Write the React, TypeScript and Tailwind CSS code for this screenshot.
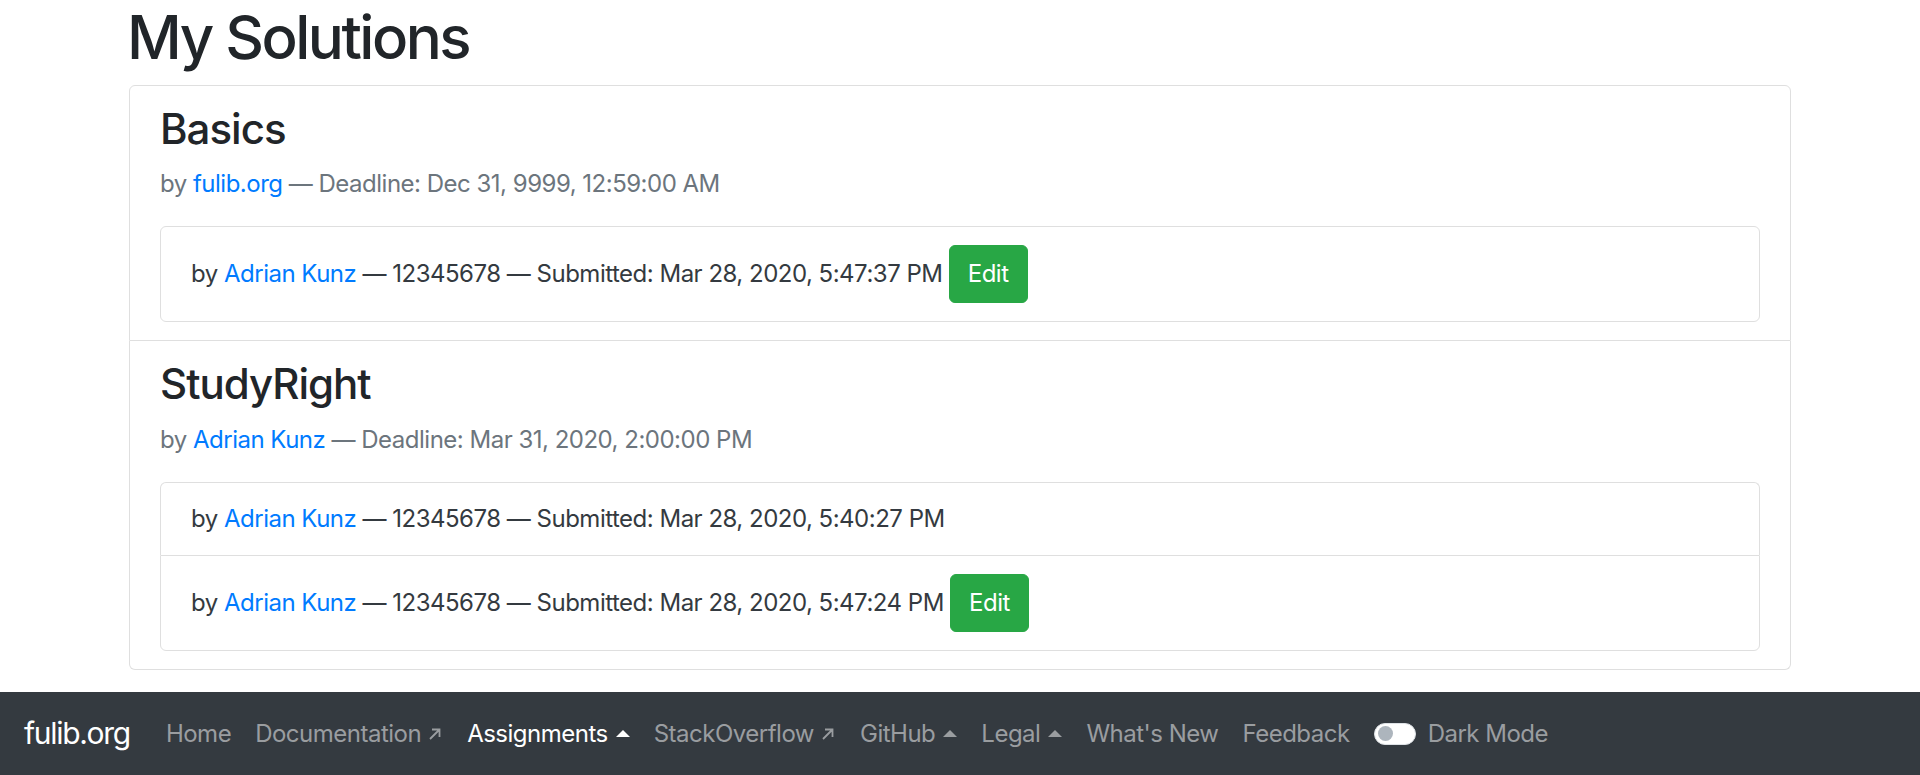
import React from "react";

const font = { fontFamily: "Inter, 'Noto Sans', sans-serif" };

const ExtIcon = () => (
  <svg
    viewBox="0 0 16 16"
    className="ml-[6px] inline-block h-[16px] w-[16px] align-[-1px]"
    fill="none"
    stroke="currentColor"
    strokeWidth="1.8"
  >
    <path d="M3 13 L12.5 3.5 M5 3.5 H12.5 V11" />
  </svg>
);

const Caret = () => (
  <span className="ml-[8px] inline-block h-0 w-0 border-x-[7px] border-b-[7px] border-t-0 border-x-transparent border-b-current align-[5px]" />
);

const Submission = ({ time, edit, last }) => (
  <div
    className={
      "border border-[#dfdfdf] px-[30px] py-[18px] text-[#343a40] " +
      (last ? "rounded-b-[6px] " : "border-b-0 ") +
      "first:rounded-t-[6px]"
    }
  >
    by <a className="text-[#007bff]">Adrian Kunz</a> — 12345678 — Submitted:{" "}
    {time}
    {edit && (
      <>
        {" "}
        <button className="rounded-[6px] border border-[#28a745] bg-[#28a745] px-[18px] py-[10px] text-white">
          Edit
        </button>
      </>
    )}
  </div>
);

const Assignment = ({ title, author, deadline, children, first }) => (
  <div
    className={
      "border-x border-b border-[#dfdfdf] px-[30px] pb-[18px] pt-[18px] " +
      (first ? "rounded-t-[6px] border-t" : "rounded-b-[6px]")
    }
  >
    <h3 className="mb-[12px] text-[42px] font-medium leading-[1.2] tracking-[-1px] text-[#212529]">
      {title}
    </h3>
    <p className="mb-[24px] text-[#6c757d]">
      by <a className="text-[#007bff]">{author}</a> — Deadline: {deadline}
    </p>
    <div>{children}</div>
  </div>
);

const NavLink = ({ children, active }) => (
  <a
    className={
      "flex items-center px-[12px] py-[12px] " +
      (active ? "text-white" : "text-[#9a9da0]")
    }
  >
    {children}
  </a>
);

export default function App() {
  return (
    <div
      style={font}
      className="min-h-[775px] bg-white text-[24px] leading-[1.5] tracking-[-0.5px] text-[#212529]"
    >
      <main className="px-[129px] pt-[1px]">
        <h1 className="-ml-[2px] mb-[12px] text-[60px] font-medium leading-[1.2] tracking-[-2.5px] text-[#212529]">
          My Solutions
        </h1>
        <div className="mb-[22px]">
          <Assignment
            first
            title="Basics"
            author="fulib.org"
            deadline="Dec 31, 9999, 12:59:00 AM"
          >
            <Submission time="Mar 28, 2020, 5:47:37 PM" edit last />
          </Assignment>
          <Assignment
            title="StudyRight"
            author="Adrian Kunz"
            deadline="Mar 31, 2020, 2:00:00 PM"
          >
            <Submission time="Mar 28, 2020, 5:40:27 PM" />
            <Submission time="Mar 28, 2020, 5:47:24 PM" edit last />
          </Assignment>
        </div>
      </main>
      <nav className="flex h-[84px] items-center bg-[#343a40] px-[24px]">
        <a className="mr-[24px] py-[7px] text-[30px] tracking-[-1.3px] text-white">
          fulib.org
        </a>
        <NavLink>Home</NavLink>
        <NavLink>
          Documentation
          <ExtIcon />
        </NavLink>
        <NavLink active>
          Assignments
          <Caret />
        </NavLink>
        <NavLink>
          StackOverflow
          <ExtIcon />
        </NavLink>
        <NavLink>
          GitHub
          <Caret />
        </NavLink>
        <NavLink>
          Legal
          <Caret />
        </NavLink>
        <NavLink>What's New</NavLink>
        <NavLink>Feedback</NavLink>
        <div className="ml-[12px] flex items-center text-[#9a9da0]">
          <span className="flex h-[22px] w-[42px] items-center rounded-full border border-[#dee2e6] bg-white px-[3px]">
            <span className="h-[15px] w-[15px] rounded-full bg-[#adb5bd]" />
          </span>
          <span className="ml-[12px]">Dark Mode</span>
        </div>
      </nav>
    </div>
  );
}
